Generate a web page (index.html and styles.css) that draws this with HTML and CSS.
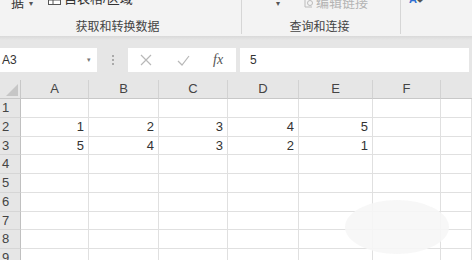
FILE: index.html
```html
<!DOCTYPE html>
<html>
<head>
<meta charset="utf-8">
<link rel="stylesheet" href="styles.css">
</head>
<body>
<div class="ribbon">
  <div class="group g1">
    <div class="tops">
      <span class="t-ju">据</span><span class="caret">▾</span>
      <svg class="tbl-ico" width="13" height="10" viewBox="0 0 13 10"><rect x="0.5" y="-4" width="12" height="9.5" fill="#fff" stroke="#555"/><line x1="0.5" y1="1" x2="12.5" y2="1" stroke="#555"/><line x1="5" y1="-4" x2="5" y2="5.5" stroke="#555"/></svg>
      <span class="t-zb">自表格/区域</span>
    </div>
    <div class="glabel">获取和转换数据</div>
  </div>
  <div class="group g2">
    <div class="tops">
      <span class="caret2">▾</span>
      <svg class="link-ico" width="10" height="10" viewBox="0 0 10 10"><path d="M1 -3 V8 H8" fill="none" stroke="#bbb"/><circle cx="6" cy="4" r="2.5" fill="none" stroke="#bbb"/></svg>
      <span class="t-bj">编辑链接</span>
    </div>
    <div class="glabel">查询和连接</div>
  </div>
  <div class="group g3">
    <div class="tops"><span class="sort-a">A</span><span class="sort-z">◆</span></div>
  </div>
</div>
<div class="fbar">
  <div class="namebox"><span>A3</span><span class="nb-caret">▾</span></div>
  <div class="dots"><i></i><i></i><i></i></div>
  <div class="fbtns">
    <svg class="x-ico" width="12" height="12" viewBox="0 0 12 12"><path d="M1 1 L11 11 M11 1 L1 11" stroke="#b8b8b8" stroke-width="1.2"/></svg>
    <svg class="ok-ico" width="13" height="11" viewBox="0 0 13 11"><path d="M1 6 L5 10 L12 1" fill="none" stroke="#b8b8b8" stroke-width="1.2"/></svg>
    <span class="fx">fx</span>
  </div>
  <div class="finput">5</div>
</div>
<div class="sheet">
  <div class="corner"><svg width="12" height="12" viewBox="0 0 12 12"><path d="M12 0 V12 H0 Z" fill="#c6c6c6"/></svg></div>
  <div class="ch">A</div><div class="ch">B</div><div class="ch">C</div><div class="ch">D</div><div class="ch">E</div><div class="ch">F</div><div class="ch last"></div>

  <div class="rh">1</div><div class="c"></div><div class="c"></div><div class="c"></div><div class="c"></div><div class="c"></div><div class="c"></div><div class="c"></div>
  <div class="rh">2</div><div class="c">1</div><div class="c">2</div><div class="c">3</div><div class="c">4</div><div class="c">5</div><div class="c"></div><div class="c"></div>
  <div class="rh">3</div><div class="c">5</div><div class="c">4</div><div class="c">3</div><div class="c">2</div><div class="c">1</div><div class="c"></div><div class="c"></div>
  <div class="rh">4</div><div class="c"></div><div class="c"></div><div class="c"></div><div class="c"></div><div class="c"></div><div class="c"></div><div class="c"></div>
  <div class="rh">5</div><div class="c"></div><div class="c"></div><div class="c"></div><div class="c"></div><div class="c"></div><div class="c"></div><div class="c"></div>
  <div class="rh">6</div><div class="c"></div><div class="c"></div><div class="c"></div><div class="c"></div><div class="c"></div><div class="c"></div><div class="c"></div>
  <div class="rh">7</div><div class="c"></div><div class="c"></div><div class="c"></div><div class="c"></div><div class="c"></div><div class="c"></div><div class="c"></div>
  <div class="rh">8</div><div class="c"></div><div class="c"></div><div class="c"></div><div class="c"></div><div class="c"></div><div class="c"></div><div class="c"></div>
  <div class="rh">9</div><div class="c"></div><div class="c"></div><div class="c"></div><div class="c"></div><div class="c"></div><div class="c"></div><div class="c"></div>
  <div class="blob"></div>
</div>
</body>
</html>
```
FILE: styles.css
```css
* { box-sizing: border-box; }
html, body { margin: 0; padding: 0; }
body {
  width: 472px; height: 260px; overflow: hidden;
  background: #e6e6e6;
  font-family: "Liberation Sans", "Noto Sans CJK SC", sans-serif;
  color: #333;
}
.ribbon {
  height: 36px; background: #f3f3f3;
  display: flex; overflow: hidden;
}
.group { position: relative; height: 36px; }
.g1 { width: 242px; }
.g2 { width: 159px; }
.g3 { flex: 1; }
.group::after {
  content: ""; position: absolute; right: 0; top: 0; height: 34px; width: 1px; background: #d6d6d6;
}
.g3::after { display: none; }
.tops {
  height: 16px; margin-top: -7px; display: flex; align-items: center;
  font-size: 13px; color: #333; white-space: nowrap;
}
.t-ju { margin-left: 11px; }
.caret { font-size: 8px; color: #555; margin-left: 5px; margin-top: 4px; }
.tbl-ico { margin-left: 15px; margin-top: 6px; }
.t-zb { margin-left: 3px; transform: translateY(-4px); }
.caret2 { font-size: 8px; color: #555; margin-left: 34px; margin-top: 4px; }
.link-ico { margin-left: 24px; margin-top: 6px; }
.t-bj { margin-left: 2px; color: #b4b4b4; font-size: 13px; }
.sort-a { margin-left: 8px; color: #2f6fd1; font-size: 11px; font-weight: bold; margin-top: -4px; }
.sort-z { color: #555; font-size: 6px; margin-top: -4px; }
.glabel {
  margin-top: 11px; text-align: center; font-size: 12px; color: #444; line-height: 14px;
}
.g1 .glabel { padding-right: 7px; }
.g2 .glabel { padding-right: 4px; }

.fbar {
  height: 44px;
  background: linear-gradient(#d9d9d9 0, #e6e6e6 4px, #e6e6e6 100%);
  display: flex; align-items: flex-start; padding-top: 12px;
}
.namebox {
  width: 97px; height: 24px; background: #fff;
  display: flex; align-items: center; justify-content: space-between;
  padding: 0 6px 0 2px; font-size: 12px; color: #333;
}
.nb-caret { font-size: 7px; color: #777; }
.dots {
  width: 31px; height: 24px; display: flex; flex-direction: column; align-items: center; justify-content: center; gap: 2px;
}
.dots i { display: block; width: 2px; height: 2px; background: #aaa; }
.fbtns {
  width: 108px; height: 24px; background: #fff; display: flex; align-items: center; padding-left: 12px;
}
.ok-ico { margin-left: 25px; }
.fx {
  margin-left: 23px; font-family: "Liberation Serif", serif; font-style: italic; font-size: 14px; color: #555;
}
.finput {
  margin-left: 4px; width: 229px; height: 24px; background: #fff;
  font-size: 12px; color: #333; padding-left: 10px; line-height: 24px;
}

.sheet {
  position: relative;
  display: grid;
  grid-template-columns: 21px 68px 70px 69px 71px 74px 68px 31px;
  grid-template-rows: 19px repeat(9, 18.75px);
  background: #fff;
  font-size: 13px;
}
.corner { background: #e6e6e6; border-right: 1px solid #c8c8c8; border-bottom: 1px solid #c8c8c8; display: flex; align-items: flex-end; justify-content: flex-end; padding: 0 2px 2px 0; }
.ch {
  background: #e6e6e6; border-right: 1px solid #d2d2d2; border-bottom: 1px solid #c8c8c8;
  text-align: center; line-height: 18px; color: #444;
}
.ch.last { border-right: none; }
.rh {
  background: #e6e6e6; border-right: 1px solid #c0c0c0; border-bottom: 1px solid #d6d6d6;
  padding-left: 2px; line-height: 18px; color: #444;
}
.c {
  border-right: 1px solid #e0e0e0; border-bottom: 1px solid #e0e0e0;
  text-align: right; padding-right: 4px; line-height: 18px; color: #333;
}
.blob {
  position: absolute; left: 345px; top: 120px; width: 104px; height: 54px;
  background: #f6f6f6; border-radius: 50%; opacity: 0.9;
}
```
